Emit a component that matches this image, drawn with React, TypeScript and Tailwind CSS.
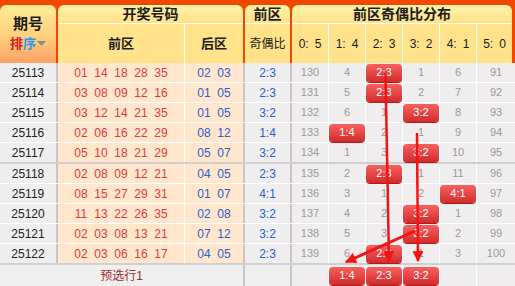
import React from "react";

type Cell = number | string;
type Row = [string, string[], string[], string, Cell[]];

const rows: Row[] = [
  ["25113", ["01", "14", "18", "28", "35"], ["02", "03"], "2:3", [130, 4, "2:3", 1, 6, 91]],
  ["25114", ["03", "08", "09", "12", "16"], ["01", "05"], "2:3", [131, 5, "2:3", 2, 7, 92]],
  ["25115", ["03", "12", "14", "21", "35"], ["01", "05"], "3:2", [132, 6, 1, "3:2", 8, 93]],
  ["25116", ["02", "06", "16", "22", "29"], ["08", "12"], "1:4", [133, "1:4", 2, 1, 9, 94]],
  ["25117", ["05", "10", "18", "21", "29"], ["05", "07"], "3:2", [134, 1, 3, "3:2", 10, 95]],
  ["25118", ["02", "08", "09", "12", "21"], ["04", "05"], "2:3", [135, 2, "2:3", 1, 11, 96]],
  ["25119", ["08", "15", "27", "29", "31"], ["01", "07"], "4:1", [136, 3, 1, 2, "4:1", 97]],
  ["25120", ["11", "13", "22", "26", "35"], ["02", "08"], "3:2", [137, 4, 2, "3:2", 1, 98]],
  ["25121", ["02", "03", "08", "13", "21"], ["07", "12"], "3:2", [138, 5, 3, "3:2", 2, 99]],
  ["25122", ["02", "03", "06", "16", "17"], ["04", "05"], "2:3", [139, 6, "2:3", 1, 3, 100]],
];

const ratios = ["0", "1", "2", "3", "4", "5"];

const Badge = ({ text }: { text: string }) => (
  <div className="w-full h-[18px] rounded-[4px] bg-linear-to-b from-[#f86060] to-[#d02a2a] flex items-center justify-center text-white text-[11px] shadow-[0_1px_0_#b01c1c]">
    {text}
  </div>
);

const DistCell = ({ v, last }: { v: Cell | null; last?: boolean }) => (
  <div
    className={`${last ? "w-[38px]" : "w-[37px] border-r border-white"} h-full bg-[#efeded] flex items-center justify-center text-[11px] text-[#9a9a9a]`}
  >
    {typeof v === "string" ? <Badge text={v} /> : v}
  </div>
);

const DataRow = ({ r, groupEnd }: { r: Row; groupEnd: boolean }) => (
  <div
    className={`flex ${groupEnd ? "h-[21px] border-b-2 border-[#cfcfcf]" : "h-[20px] border-b border-white"}`}
  >
    <div className="w-[58px] border-r-2 border-[#c6c6c6] bg-[#efeeee] flex items-center justify-center text-[12px] text-[#222]">
      {r[0]}
    </div>
    <div className="w-[127px] border-r border-white bg-[#ffe6cc] flex items-center justify-center text-[12px] text-[#e03c3c]">
      {r[1].map((n, i) => (
        <span key={i} className="w-[20px] text-center">
          {n}
        </span>
      ))}
    </div>
    <div className="w-[60px] border-r-2 border-[#c6c6c6] bg-[#ffe6cc] flex items-center justify-center text-[12px] text-[#2a5fd0]">
      {r[2].map((n, i) => (
        <span key={i} className="w-[20px] text-center">
          {n}
        </span>
      ))}
    </div>
    <div className="w-[47px] border-r-2 border-[#c6c6c6] bg-[#efeded] flex items-center justify-center text-[12px] text-[#2a5fd0]">
      {r[3]}
    </div>
    {r[4].map((v, i) => (
      <DistCell key={i} v={v} last={i === 5} />
    ))}
  </div>
);

export default function App() {
  return (
    <div className="relative w-[515px] h-[286px] overflow-hidden bg-white font-['Liberation_Sans','Noto_Sans_CJK_SC',sans-serif]">
      {/* header */}
      <div className="flex bg-[#f04800] pt-[5px] h-[63px] text-[#1c1c1c]">
        <div className="w-[56px] rounded-t-[6px] bg-linear-to-b from-[#ffeb96] via-[#ffd27e] to-[#ffa266] flex flex-col items-center justify-center font-bold">
          <div className="text-[15px] leading-[18px]">期号</div>
          <div className="flex items-center text-[13px] leading-[18px] mt-[2px]">
            <span className="text-[#d42222]">排</span>
            <span className="text-[#1f9cf0]">序</span>
            <svg width="9" height="6" viewBox="0 0 9 6" className="ml-[1px]">
              <path d="M0 0 L9 0 L4.5 5 z" fill="#8a8a8a" />
            </svg>
          </div>
        </div>
        <div className="w-[185px] ml-[2px] rounded-t-[6px] overflow-hidden flex flex-col">
          <div className="h-[19px] border-b border-white bg-linear-to-b from-[#fff2aa] to-[#ffe186] flex items-center justify-center text-[14px] font-bold">
            开奖号码
          </div>
          <div className="flex-1 flex bg-[#ffe28a] text-[13px] font-bold">
            <div className="w-[127px] border-r border-white flex items-center justify-center">前区</div>
            <div className="flex-1 flex items-center justify-center">后区</div>
          </div>
        </div>
        <div className="w-[45px] ml-[2px] rounded-t-[6px] overflow-hidden flex flex-col">
          <div className="h-[19px] border-b border-white bg-linear-to-b from-[#fff2aa] to-[#ffe186] flex items-center justify-center text-[14px] font-bold">
            前区
          </div>
          <div className="flex-1 bg-[#ffe28a] flex items-center justify-center text-[12px]">奇偶比</div>
        </div>
        <div className="w-[220px] ml-[2px] rounded-t-[6px] overflow-hidden flex flex-col">
          <div className="h-[19px] border-b border-white bg-linear-to-b from-[#fff2aa] to-[#ffe186] flex items-center justify-center text-[14px] font-bold">
            前区奇偶比分布
          </div>
          <div className="flex-1 flex bg-[#ffe28a] text-[12px]">
            {ratios.map((a, i) => (
              <div
                key={a}
                className={`${i === 5 ? "w-[35px]" : "w-[37px] border-r border-white"} flex items-center justify-center`}
              >
                {a}:{"\u2002"}
                {5 - i}
              </div>
            ))}
          </div>
        </div>
      </div>

      {/* rows */}
      {rows.map((r, i) => (
        <DataRow key={r[0]} r={r} groupEnd={i === 4 || i === 9} />
      ))}

      {/* footer */}
      <div className="flex h-[21px]">
        <div className="w-[245px] border-r-2 border-[#c6c6c6] bg-[#efefef] flex items-center justify-center text-[12px] text-[#9e2a2a]">
          预选行1
        </div>
        <div className="w-[47px] border-r-2 border-[#c6c6c6] bg-[#efefef]"></div>
        {[null, "1:4", "2:3", "3:2", null, null].map((v, i) => (
          <DistCell key={i} v={v} last={i === 5} />
        ))}
      </div>

      {/* trend arrows */}
      <svg className="absolute inset-0 pointer-events-none" width="515" height="286">
        <defs>
          <marker
            id="ah"
            viewBox="0 0 10 10"
            refX="9"
            refY="5"
            markerWidth="12"
            markerHeight="11"
            markerUnits="userSpaceOnUse"
            orient="auto"
          >
            <path d="M0 0 L10 5 L0 10 z" fill="#f21414" />
          </marker>
        </defs>
        <line x1="385.5" y1="73" x2="389" y2="261" stroke="#f21414" strokeWidth="2.5" markerEnd="url(#ah)" />
        <line x1="417" y1="133" x2="418" y2="261" stroke="#f21414" strokeWidth="2.5" markerEnd="url(#ah)" />
        <line x1="415" y1="231" x2="346" y2="262" stroke="#f21414" strokeWidth="3" markerEnd="url(#ah)" />
      </svg>
    </div>
  );
}
